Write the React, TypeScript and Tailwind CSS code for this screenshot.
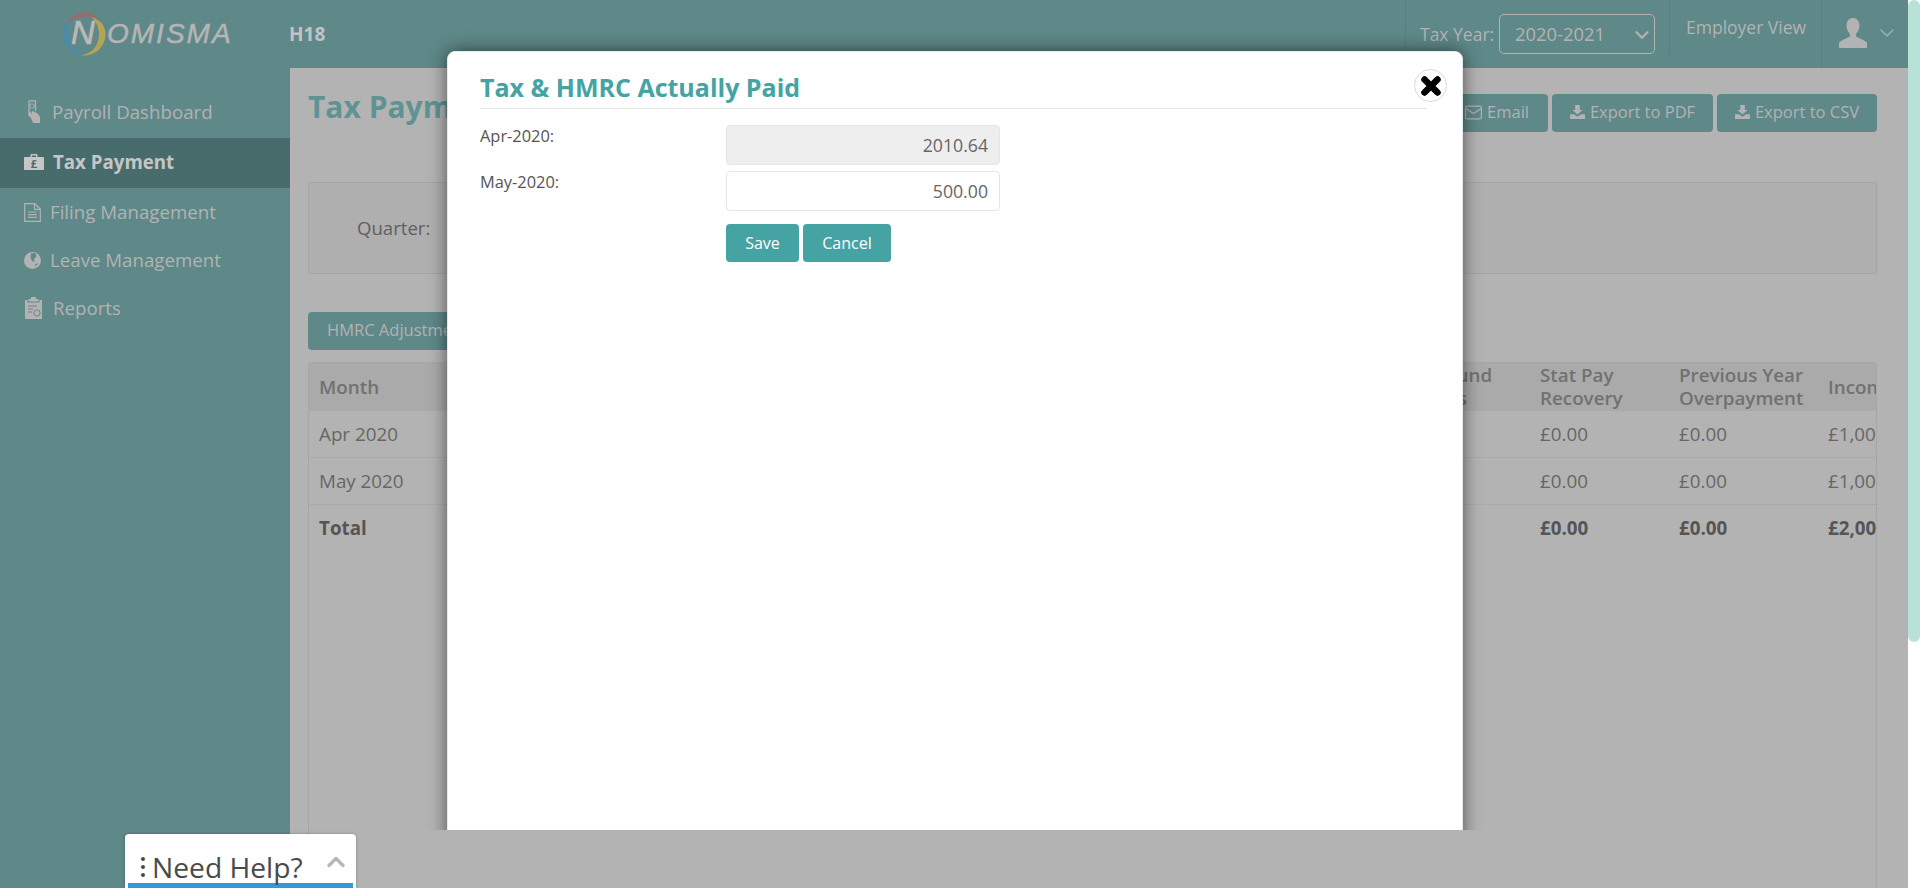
import { ChevronDown, ChevronUp, Mail } from "lucide-react";

const FONT = "font-['Open_Sans','Noto_Sans',sans-serif]";

function DownloadIcon() {
  return (
    <svg width="15" height="14" viewBox="0 0 15 14" fill="currentColor">
      <path d="M5.2 0h4.6v5h2.8L7.5 9.6 2.4 5h2.8z" />
      <path d="M0 9.2h4.2l2 1.9c.7.6 1.9.6 2.6 0l2-1.9H15V14H0z" />
    </svg>
  );
}

function HandIcon() {
  return (
    <svg width="14" height="24" viewBox="0 0 14 24" fill="none" stroke="currentColor">
      <path d="M2 .8h6.5v10M2 .8v14" strokeWidth="1.3" />
      <circle cx="5" cy="6" r="2.2" strokeWidth="1" />
      <path d="M3 11l2 3v-3l3 1 3 2 2 3v6H6l-2-5-3-3z" fill="currentColor" stroke="none" />
    </svg>
  );
}

function CaseIcon() {
  return (
    <svg width="20" height="16" viewBox="0 0 20 16" fill="currentColor">
      <path d="M6.5 3V1.2C6.5.5 7 0 7.7 0h4.6c.7 0 1.2.5 1.2 1.2V3H19c.6 0 1 .4 1 1v11c0 .6-.4 1-1 1H1c-.6 0-1-.4-1-1V4c0-.6.4-1 1-1zm1.4 0h4.2V1.4H7.9z" />
      <text x="10" y="14" fontSize="11" fontWeight="700" textAnchor="middle" fill="#486b6b">£</text>
    </svg>
  );
}

function FileIcon() {
  return (
    <svg width="17" height="19" viewBox="0 0 17 19" fill="none" stroke="currentColor" strokeWidth="1.2">
      <path d="M.7.7h10l5.6 5.4v12.2H.7zM10.5.7v5.6h5.8" />
      <path d="M4 9h9M4 11.7h9M4 14.4h9" />
    </svg>
  );
}

function GlobeIcon() {
  return (
    <svg width="17" height="17" viewBox="0 0 17 17">
      <circle cx="8.5" cy="8.5" r="8.5" fill="currentColor" />
      <path d="M7 1.5l4.5-.5 1 3.5-2.5 2.500.5 3-2.500-1-1.500-3.500zM11 12.500l3-1.500-2 3.500z" fill="#5f8888" />
    </svg>
  );
}

function ClipboardIcon() {
  return (
    <svg width="17" height="22" viewBox="0 0 17 22" fill="currentColor">
      <path d="M6 0h5v2h2.5v2.5h-10V2H6z" />
      <path d="M0 3h2.5v2.5h12V3H17v19H0z" />
      <path d="M3 9h9M3 12h5M3 15h4" stroke="#5f8888" fill="none" />
      <circle cx="12" cy="16" r="3.2" fill="#b3b3b3" stroke="#5f8888" />
    </svg>
  );
}

function UserIcon() {
  return (
    <svg width="28" height="30" viewBox="0 0 28 30" fill="currentColor">
      <path d="M14 0c4 0 6.500 3.200 6.500 7.500 0 3.300-1.300 6.200-3.300 8v3.300c3.400 1.500 8.800 3.700 10.800 5.900V30H0v-5.300c2-2.200 7.400-4.400 10.800-5.900v-3.300c-2-1.800-3.300-4.700-3.300-8C7.500 3.200 10 0 14 0z" />
    </svg>
  );
}

function LogoMark() {
  return (
    <svg width="44" height="44" viewBox="0 0 44 44">
      <path d="M4 14C8 5 15 .5 22 .5c7 0 12 3 15 8-5-3-9-4-14-4C15 4.500 9 8 4 14z" fill="#a0686b" />
      <path d="M6 7.500C2.500 11.500.5 16.500.5 22c0 12 9.500 21.500 21.500 21.500 1.500 0 2.500-.2 3.500-.4C14 42 7 32 7 21c0-5 0-9-1-13.500z" fill="#4f8aa3" />
      <path d="M29 5c9 2 14.500 9 14.500 17 0 12-9.500 21.500-21.500 21.500-1.500 0-3-.2-4-.5C30 43 37 33 37 22c0-7-3-13-8-17z" fill="#b3a653" />
    </svg>
  );
}

const NAV = [
  { label: "Payroll Dashboard", icon: <HandIcon />, cls: "gap-[11px] pl-[27px] h-[50px] pb-[2px]" },
  { label: "Tax Payment", icon: <CaseIcon />, cls: "gap-[9px] pl-[24px] h-[50px] pb-[2px] bg-[#486b6b] font-bold text-[#c6c6c6]" },
  { label: "Filing Management", icon: <FileIcon />, cls: "gap-[9px] pl-[24px] h-[48px]" },
  { label: "Leave Management", icon: <GlobeIcon />, cls: "gap-[9px] pl-[24px] h-[48px]" },
  { label: "Reports", icon: <ClipboardIcon />, cls: "gap-[11px] pl-[25px] h-[48px]" },
];

function Row({ cells, bold, last }: { cells: string[]; bold?: boolean; last?: boolean }) {
  return (
    <div className={`flex items-center h-[47px] pl-[10px] whitespace-nowrap ${last ? "" : "border-b border-[#aaaaaa]"} ${bold ? "font-bold text-[#555555]" : "text-[#666666]"}`}>
      <span className="w-[1221px] shrink-0">{cells[0]}</span>
      <span className="w-[139px] shrink-0">{cells[1]}</span>
      <span className="w-[149px] shrink-0">{cells[2]}</span>
      <span className="shrink-0">{cells[3]}</span>
    </div>
  );
}

export default function App() {
  return (
    <div className={`relative h-[888px] overflow-hidden flex bg-white text-[16.5px] ${FONT}`}>
      <div className="w-[1908px] h-full shrink-0 flex flex-col bg-[#b3b3b3]">
        {/* Header */}
        <header className="h-[68px] shrink-0 flex bg-[#5f8888] text-[#b3b3b3]">
          <div className="w-[289px] shrink-0 relative">
            <div className="absolute left-[62px] top-[12px]">
              <LogoMark />
            </div>
            <span className="absolute left-[71px] top-[13px] text-[33px] leading-[40px] italic font-['Liberation_Sans',sans-serif] [-webkit-text-stroke:0.7px_#b9b9b9] text-[#b9b9b9]">N</span>
            <span className="absolute left-[107px] top-[16px] text-[28px] leading-[36px] italic tracking-[2px] font-['Liberation_Sans',sans-serif] [-webkit-text-stroke:0.5px_#b5b5b5] text-[#b5b5b5]">OMISMA</span>
          </div>
          <div className="flex-1 flex items-center font-bold text-[19px] text-[#c3c3c3]">H18</div>
          <div className="w-[1px] h-[55px] bg-[#578080]" />
          <div className="w-[263px] flex items-start pl-[14px] pt-[14px]">
            <span className="w-[79px] text-[17.5px] leading-[40px]">Tax Year:</span>
            <div className="w-[156px] h-[40px] border border-[#b3b3b3] rounded-[5px] pl-[15px] pr-[1px] flex items-center justify-between text-[18.4px]">
              2020-2021
              <ChevronDown size={22} strokeWidth={2.5} className="mt-[2px]" />
            </div>
          </div>
          <div className="w-[1px] h-[55px] bg-[#578080]" />
          <div className="w-[151px] pl-[16px] pt-[15px] text-[17.5px] leading-[24px]">Employer View</div>
          <div className="w-[1px] h-full bg-[#578080]" />
          <div className="w-[86px] flex items-center pl-[17px] gap-[8px] pb-[2px]">
            <UserIcon />
            <ChevronDown size={24} strokeWidth={1.5} className="text-[#98b0b0]" />
          </div>
        </header>

        <div className="flex-1 flex min-h-0">
          {/* Sidebar */}
          <aside className="w-[290px] shrink-0 bg-[#5f8888] text-[#b3b3b3] text-[18.7px] pt-[20px]">
            {NAV.map((item) => (
              <div key={item.label} className={`flex items-center ${item.cls}`}>
                {item.icon}
                <span>{item.label}</span>
              </div>
            ))}
          </aside>

          {/* Page content, behind the overlay */}
          <main className="flex-1 pl-[18px] pr-[31px] min-w-0">
            <div className="flex justify-between items-start h-[114px] pt-[21px]">
              <h1 className="text-[30px] leading-[36px] font-bold text-[#5f9393]">Tax Payment</h1>
              <div className="flex gap-[4px] mt-[5px] text-[#b3b3b3]">
                <button className="h-[38px] px-[19px] pb-[2px] bg-[#5f8888] rounded-[4px] flex items-center gap-[4px]">
                  <Mail size={19} strokeWidth={1.5} />
                  Email
                </button>
                <button className="h-[38px] w-[161px] pb-[2px] bg-[#5f8888] rounded-[4px] flex items-center justify-center gap-[5px]">
                  <DownloadIcon />
                  Export to PDF
                </button>
                <button className="h-[38px] w-[160px] pb-[2px] bg-[#5f8888] rounded-[4px] flex items-center justify-center gap-[5px]">
                  <DownloadIcon />
                  Export to CSV
                </button>
              </div>
            </div>
            <div className="h-[92px] border border-[#a6a6a6] rounded-[2px] bg-[#afafaf] flex items-center pl-[48px] text-[18.6px] text-[#5f5f5f]">
              Quarter:
            </div>
            <button className="block mt-[38px] h-[38px] pl-[19px] pr-[18px] pb-[2px] bg-[#5f8888] rounded-[4px] text-[#b3b3b3]">HMRC Adjustment</button>
            <div className="mt-[12px] h-[900px] border border-[#a6a6a6] rounded-[4px] overflow-hidden text-[18.8px]">
              <div className="flex items-center h-[48px] bg-[#aaaaaa] pl-[10px] font-semibold text-[#717171] leading-[23px] whitespace-nowrap">
                <span className="w-[1108px] shrink-0">Month</span>
                <span className="w-[113px] shrink-0">Refund<br />Loss</span>
                <span className="w-[139px] shrink-0">Stat Pay<br />Recovery</span>
                <span className="w-[149px] shrink-0">Previous Year<br />Overpayment</span>
                <span className="shrink-0">Income</span>
              </div>
              <Row cells={["Apr 2020", "£0.00", "£0.00", "£1,000.00"]} />
              <Row cells={["May 2020", "£0.00", "£0.00", "£1,000.00"]} />
              <Row bold last cells={["Total", "£0.00", "£0.00", "£2,000.00"]} />
            </div>
          </main>
        </div>
      </div>

      {/* Scrollbar */}
      <div className="w-[12px] h-[642px] shrink-0 rounded-[6px] bg-[#b8e2d7]" />

      {/* Modal, cut off above the page bottom */}
      <div className="absolute inset-x-0 top-0 h-[830px] overflow-hidden">
        <div className="absolute left-[447px] top-[51px] w-[1016px] h-[900px] bg-white border border-[#e8e8e8] rounded-t-[8px] shadow-[0_0_18px_rgba(0,0,0,0.55)] pl-[32px] pr-[35px] text-[#555555]">
          <h2 className="pt-[18px] pb-[4px] text-[25px] leading-[34px] font-bold text-[#45a3a3] border-b border-[#e5e5e5]">Tax &amp; HMRC Actually Paid</h2>
          <div className="mt-[16px] flex flex-col gap-[6px]">
            <div className="flex">
              <label className="w-[246px] pt-[1px] text-[16.4px] leading-[20px]">Apr-2020:</label>
              <input readOnly value="2010.64" className="w-[274px] h-[40px] px-[11px] text-right text-[17.7px] text-[#666666] bg-[#eeeeee] border border-[#e5e5e5] rounded-[4px]" />
            </div>
            <div className="flex">
              <label className="w-[246px] pt-[1px] text-[16.4px] leading-[20px]">May-2020:</label>
              <input readOnly value="500.00" className="w-[274px] h-[40px] px-[11px] text-right text-[17.7px] text-[#666666] bg-white border border-[#e5e5e5] rounded-[4px]" />
            </div>
          </div>
          <div className="ml-[246px] mt-[13px] flex gap-[4px] text-white text-[16px]">
            <button className="h-[38px] w-[73px] pb-[1px] bg-[#45a3a3] rounded-[4px]">Save</button>
            <button className="h-[38px] w-[88px] pb-[1px] bg-[#45a3a3] rounded-[4px]">Cancel</button>
          </div>
          <button className="absolute left-[966px] top-[17px] w-[33px] h-[33px] rounded-full bg-white border border-[#d9d9d9] flex items-center justify-center">
            <svg width="22" height="22" viewBox="0 0 22 22" stroke="#000" strokeWidth="6.5" strokeLinecap="round">
              <path d="M4.5 4.5l13 13M17.5 4.5l-13 13" />
            </svg>
          </button>
        </div>
      </div>

      {/* Need help widget */}
      <div className="absolute left-[125px] top-[834px] w-[231px] h-[54px] bg-white rounded-t-[4px] shadow-[0_0_3px_rgba(0,0,0,0.3)] px-[3px] flex flex-col justify-end">
        <div className="relative flex items-center pl-[13px] h-[32px] text-[28.2px] text-[#4a4a4a]">
          <span className="mr-[7px] flex flex-col gap-[4px]">
            <span className="w-[4px] h-[4px] rounded-full bg-[#4a4a4a]" />
            <span className="w-[4px] h-[4px] rounded-full bg-[#4a4a4a]" />
            <span className="w-[4px] h-[4px] rounded-full bg-[#4a4a4a]" />
          </span>
          <span className="leading-none">Need Help?</span>
          <ChevronUp size={28} strokeWidth={3} className="absolute right-[3px] top-[-3px] text-[#b8b8b8]" />
        </div>
        <div className="h-[5px] bg-[#3498db] shrink-0" />
      </div>
    </div>
  );
}
